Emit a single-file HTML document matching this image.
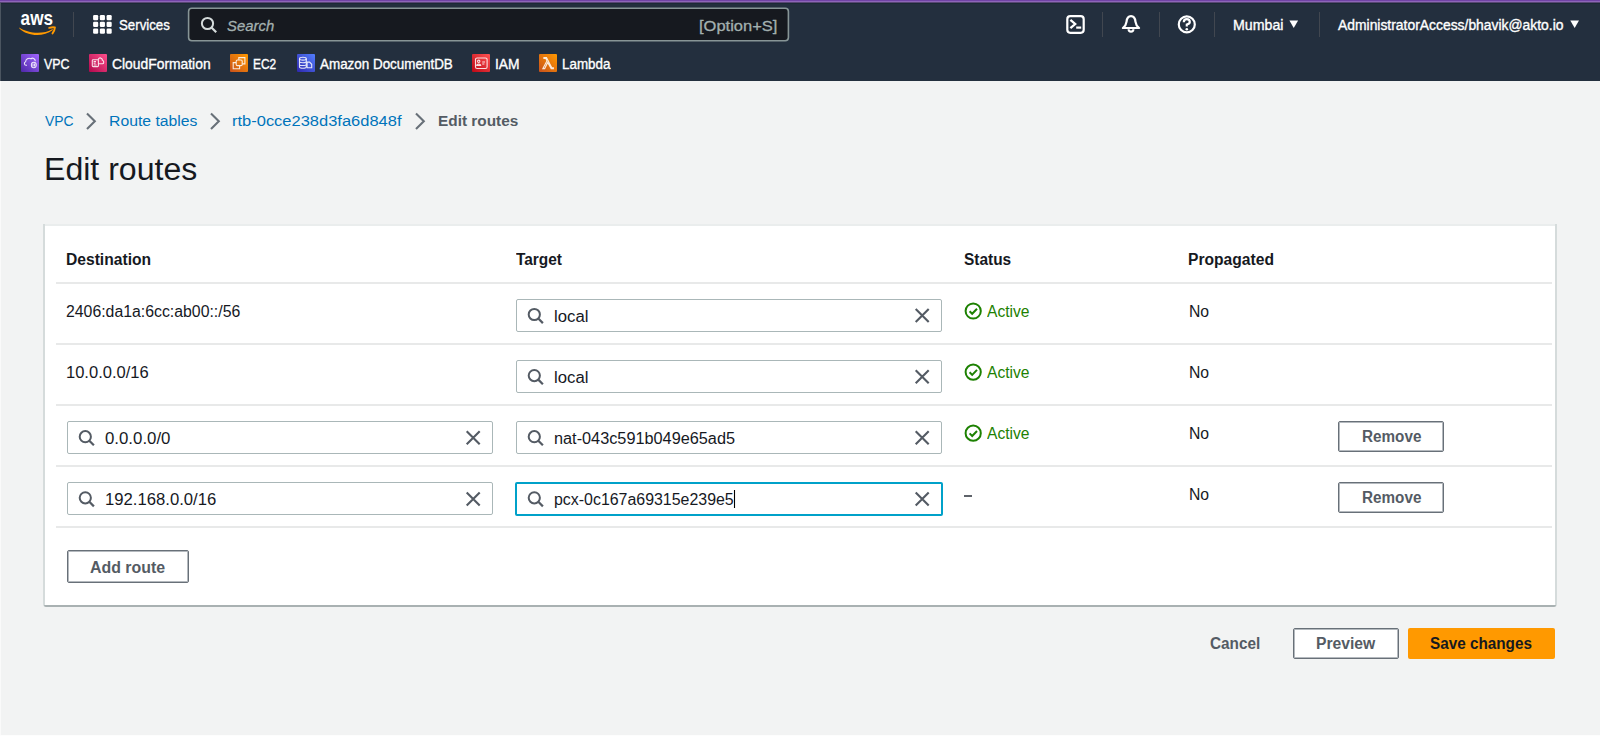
<!DOCTYPE html>
<html><head><meta charset="utf-8"><title>Edit routes</title>
<style>
html,body{margin:0;padding:0;width:1600px;height:736px;overflow:hidden;background:#f2f3f3;font-family:"Liberation Sans",sans-serif;}
.t{position:absolute;white-space:pre;line-height:normal;transform-origin:0 0;}
.a{position:absolute;}
#nav{position:absolute;left:0;top:0;width:1600px;height:81px;background:#232f3e;}
#purple{position:absolute;left:0;top:0;width:1600px;height:4px;background:linear-gradient(#7143a6 0,#7143a6 1px,#8d66b8 1px,#8d66b8 2px,#574673 2px,#574673 3px,#1b2a35 3px,#1b2a35 4px);}
.sep{position:absolute;width:1px;top:12px;height:25px;background:#414750;}
.sq{position:absolute;width:18px;height:18px;top:54px;border-radius:1px;}
.inp{position:absolute;background:#fff;border:1px solid #aab7b8;border-radius:2px;box-sizing:border-box;}
.btn{position:absolute;background:#fff;border:1px solid #687078;border-radius:2px;box-sizing:border-box;box-shadow:inset 0 0 0 1px #b4b9be;}
.div{position:absolute;left:56px;width:1496px;height:2px;background:#e8e9e9;}
svg{position:absolute;overflow:visible;}
</style></head><body>
<div id="nav"></div>
<div id="purple"></div>
<!-- aws logo -->
<svg style="left:0;top:0" width="80" height="40" viewBox="0 0 80 40">
  <text x="20.6" y="24.6" font-family="Liberation Sans" font-weight="700" font-size="20.5" fill="#fff" textLength="32.4" lengthAdjust="spacingAndGlyphs">aws</text>
  <path d="M19.4 27.5 C27 33.2 43 35.2 52.6 29 L52.8 30 C43 37.6 27 36.2 19.4 28.5 Z" fill="#ff9900"/>
  <path d="M49.2 27.9 Q52.6 26.9 54.9 27.5 Q54.7 30.6 52.5 33.4" stroke="#ff9900" stroke-width="1.9" fill="none" stroke-linecap="round" stroke-linejoin="round"/>
</svg>
<div class="sep" style="left:73px"></div>
<!-- grid -->
<svg style="left:0;top:0" width="1" height="1"><g fill="#fff"><rect x="93.1" y="15.1" width="5.1" height="5.1" rx="1.2"/><rect x="99.85" y="15.1" width="5.1" height="5.1" rx="1.2"/><rect x="106.6" y="15.1" width="5.1" height="5.1" rx="1.2"/><rect x="93.1" y="21.85" width="5.1" height="5.1" rx="1.2"/><rect x="99.85" y="21.85" width="5.1" height="5.1" rx="1.2"/><rect x="106.6" y="21.85" width="5.1" height="5.1" rx="1.2"/><rect x="93.1" y="28.6" width="5.1" height="5.1" rx="1.2"/><rect x="99.85" y="28.6" width="5.1" height="5.1" rx="1.2"/><rect x="106.6" y="28.6" width="5.1" height="5.1" rx="1.2"/></g></svg>
<!-- search -->
<svg style="left:0;top:0" width="1" height="1"><rect x="188.6" y="8.3" width="599.8" height="32.4" rx="3.2" fill="#16191f" stroke="#879596" stroke-width="1.6"/></svg>
<svg style="left:0;top:0" width="1" height="1">
  <circle cx="207.5" cy="23.5" r="5.6" stroke="#d5dbdb" stroke-width="2" fill="none"/>
  <path d="M211.5 27.5 L216.2 32.2" stroke="#d5dbdb" stroke-width="2.2" stroke-linecap="butt"/>
</svg>
<!-- right icons -->
<svg style="left:0;top:0" width="1" height="1">
  <rect x="1067.3" y="16.2" width="16.4" height="16.6" rx="3" stroke="#fff" stroke-width="2.2" fill="none"/>
  <path d="M1070.4 19.8 L1075.2 24 L1070.4 28.2" stroke="#fff" stroke-width="2.3" fill="none"/>
  <path d="M1076.2 27.6 L1081.2 27.6" stroke="#fff" stroke-width="2.2"/>
  <!-- bell -->
  <path d="M1122.9 28 H1139.1 Q1135.9 25.4 1135.5 21.8 Q1135 16.1 1131 16.1 Q1127 16.1 1126.5 21.8 Q1126.1 25.4 1122.9 28 Z" stroke="#fff" stroke-width="2.2" fill="none" stroke-linejoin="round"/>
  <path d="M1128.6 29.2 A2.4 2.4 0 0 0 1133.4 29.2" stroke="#fff" stroke-width="2.1" fill="none"/>
  <!-- help -->
  <circle cx="1186.8" cy="24.4" r="8" stroke="#fff" stroke-width="2.2" fill="none"/>
  <path d="M1183.8 22.2 Q1183.8 19.2 1186.8 19.2 Q1189.8 19.2 1189.8 21.9 Q1189.8 23.6 1186.8 24.5 L1186.8 26.6" stroke="#fff" stroke-width="2.2" fill="none"/>
  <circle cx="1186.8" cy="29.2" r="1.3" fill="#fff"/>
  <path d="M1289.4 20.5 L1298.1 20.5 L1293.75 28 Z" fill="#fff"/>
  <path d="M1570.3 20.5 L1579 20.5 L1574.65 28 Z" fill="#fff"/>
</svg>
<div class="sep" style="left:1102px"></div>
<div class="sep" style="left:1159px"></div>
<div class="sep" style="left:1214px"></div>
<div class="sep" style="left:1319px"></div>
<!-- service icons -->
<div class="sq" style="left:21px;background:linear-gradient(45deg,#4d27a8,#a166ff)"></div>
<div class="sq" style="left:89px;background:linear-gradient(45deg,#b0084d,#ff4f8b)"></div>
<div class="sq" style="left:230px;background:linear-gradient(45deg,#c8511b,#ff9900)"></div>
<div class="sq" style="left:297px;background:linear-gradient(45deg,#2e27ad,#527fff)"></div>
<div class="sq" style="left:472px;background:linear-gradient(45deg,#bd0816,#ff5252)"></div>
<div class="sq" style="left:539px;background:linear-gradient(45deg,#c8511b,#ff9900)"></div>
<svg style="left:0;top:0" width="1" height="1">
 <g stroke="#fff" stroke-opacity="0.85" stroke-width="1.1" fill="none">
  <g transform="translate(21,54)">
   <path d="M6 11.3 H5 C3.2 11.3 2.7 8.3 4.6 7.8 C4.7 5 7.5 3.3 10 4.8 C11.5 3.3 14.3 4.6 14.3 7.2"/>
   <rect x="10.4" y="8.3" width="4.8" height="5.4" rx="2.4"/><path d="M12 9.5 V12.5 M13.6 9.5 V12.5"/>
  </g>
  <g transform="translate(89,54)">
   <rect x="3.3" y="5.8" width="6.1" height="6.8" rx="0.8"/><path d="M4.6 7.6 H7 M4.6 9.3 H6.6 M4.6 11 H7.6"/>
   <path d="M9.4 5.8 C9.4 3.8 11.3 3.3 12.3 4.5 C13.2 4.8 13.5 5.5 13.4 6.2 C15 6.5 15.3 9.6 13.6 9.8 H9.5"/>
  </g>
  <g transform="translate(230,54)">
   <path d="M8.8 5.8 V3.6 H14.9 V9.9 H12.5"/><path d="M6 8.6 H3.2 V14.8 H9.6 V11.9"/>
   <rect x="6.2" y="6" width="6" height="5.6" rx="1.2"/>
  </g>
  <g transform="translate(297,54)">
   <ellipse cx="5.9" cy="4.7" rx="3.4" ry="1.4"/><path d="M2.5 4.7 V13 C2.5 14.7 9.3 14.7 9.3 13 V4.7 M2.5 7.6 C2.5 9.1 9.3 9.1 9.3 7.6 M2.5 10.4 C2.5 11.9 9.3 11.9 9.3 10.4"/>
   <path d="M10.1 8.1 H12.6 L14.7 10.3 V13.8 H10.1 Z"/>
  </g>
  <g transform="translate(472,54)">
   <rect x="3.5" y="4" width="11.6" height="10.5" rx="1.6"/>
   <circle cx="6.7" cy="7.3" r="1.2"/><path d="M4.7 11.4 C4.8 9.6 8.6 9.6 8.7 11.4 Z M10.2 8 H13 M10.2 10 H12.4"/>
  </g>
  <g transform="translate(539,54)">
   <path d="M3.9 14.6 L7.9 6.9 L6.8 4.4 H4.9 V3.5 H7.5 L12.8 13.8 H14.4 V14.6 H12.2 L8.7 8.5 L5.7 14.6 Z"/>
  </g>
 </g>
</svg>
<div class="a" style="left:0;top:3px;width:1px;height:78px;background:#4b5560"></div>
<div class="a" style="left:0;top:81px;width:1px;height:655px;background:#fafafa"></div>

<!-- container -->
<div class="a" style="left:43px;top:224px;width:1514px;height:383px;background:#d5dbdb;border-radius:0 0 3px 3px"></div>
<div class="a" style="left:44px;top:605px;width:1512px;height:2px;background:#a9b1b2;border-radius:0 0 3px 3px"></div>
<div class="a" style="left:45px;top:224px;width:1510px;height:2px;background:#eaeded"></div>
<div class="a" style="left:45px;top:226px;width:1510px;height:379px;background:#fff"></div>
<div class="div" style="top:282px"></div>
<div class="div" style="top:343px"></div>
<div class="div" style="top:404px"></div>
<div class="div" style="top:465px"></div>
<div class="div" style="top:526px"></div>

<!-- inputs -->
<div class="inp" style="left:516px;top:299px;width:426px;height:33px"></div>
<div class="inp" style="left:516px;top:360px;width:426px;height:33px"></div>
<div class="inp" style="left:67px;top:421px;width:426px;height:33px"></div>
<div class="inp" style="left:516px;top:421px;width:426px;height:33px"></div>
<div class="inp" style="left:67px;top:482px;width:426px;height:33px"></div>
<div class="inp" style="left:515px;top:482px;width:428px;height:34px;border:2px solid #00a1c9"></div>

<svg style="left:0;top:0" width="1" height="1">
  <g transform="translate(534.3,314.5)"><circle cx="0" cy="0" r="5.6" stroke="#545b64" stroke-width="2" fill="none"/><path d="M4 4 L8.6 8.6" stroke="#545b64" stroke-width="2.2"/></g><g transform="translate(922.2,315.6)"><path d="M-6.5 -6.5 L6.5 6.5 M6.5 -6.5 L-6.5 6.5" stroke="#545b64" stroke-width="2.1"/></g>
  <g transform="translate(534.3,375.6)"><circle cx="0" cy="0" r="5.6" stroke="#545b64" stroke-width="2" fill="none"/><path d="M4 4 L8.6 8.6" stroke="#545b64" stroke-width="2.2"/></g><g transform="translate(922.2,376.7)"><path d="M-6.5 -6.5 L6.5 6.5 M6.5 -6.5 L-6.5 6.5" stroke="#545b64" stroke-width="2.1"/></g>
  <g transform="translate(85.3,436.7)"><circle cx="0" cy="0" r="5.6" stroke="#545b64" stroke-width="2" fill="none"/><path d="M4 4 L8.6 8.6" stroke="#545b64" stroke-width="2.2"/></g><g transform="translate(473.2,437.8)"><path d="M-6.5 -6.5 L6.5 6.5 M6.5 -6.5 L-6.5 6.5" stroke="#545b64" stroke-width="2.1"/></g>
  <g transform="translate(534.3,436.7)"><circle cx="0" cy="0" r="5.6" stroke="#545b64" stroke-width="2" fill="none"/><path d="M4 4 L8.6 8.6" stroke="#545b64" stroke-width="2.2"/></g><g transform="translate(922.2,437.8)"><path d="M-6.5 -6.5 L6.5 6.5 M6.5 -6.5 L-6.5 6.5" stroke="#545b64" stroke-width="2.1"/></g>
  <g transform="translate(85.3,497.8)"><circle cx="0" cy="0" r="5.6" stroke="#545b64" stroke-width="2" fill="none"/><path d="M4 4 L8.6 8.6" stroke="#545b64" stroke-width="2.2"/></g><g transform="translate(473.2,498.9)"><path d="M-6.5 -6.5 L6.5 6.5 M6.5 -6.5 L-6.5 6.5" stroke="#545b64" stroke-width="2.1"/></g>
  <g transform="translate(534.3,497.8)"><circle cx="0" cy="0" r="5.6" stroke="#545b64" stroke-width="2" fill="none"/><path d="M4 4 L8.6 8.6" stroke="#545b64" stroke-width="2.2"/></g><g transform="translate(922.2,498.9)"><path d="M-6.5 -6.5 L6.5 6.5 M6.5 -6.5 L-6.5 6.5" stroke="#545b64" stroke-width="2.1"/></g>
  <g transform="translate(973.2,311)"><circle cx="0" cy="0" r="7.6" stroke="#1d8102" stroke-width="2" fill="none"/><path d="M-3.6 0.2 L-1 2.8 L3.8 -2.2" stroke="#1d8102" stroke-width="2" fill="none"/></g>
  <g transform="translate(973.2,372.1)"><circle cx="0" cy="0" r="7.6" stroke="#1d8102" stroke-width="2" fill="none"/><path d="M-3.6 0.2 L-1 2.8 L3.8 -2.2" stroke="#1d8102" stroke-width="2" fill="none"/></g>
  <g transform="translate(973.2,433.2)"><circle cx="0" cy="0" r="7.6" stroke="#1d8102" stroke-width="2" fill="none"/><path d="M-3.6 0.2 L-1 2.8 L3.8 -2.2" stroke="#1d8102" stroke-width="2" fill="none"/></g>
  <path d="M964 496 L972 496" stroke="#414750" stroke-width="1.7"/>
  <path d="M734.5 490 L734.5 508" stroke="#000" stroke-width="1.1"/>
</svg>

<!-- buttons -->
<div class="btn" style="left:1338px;top:421px;width:106px;height:31px"></div>
<div class="btn" style="left:1338px;top:482px;width:106px;height:31px"></div>
<div class="btn" style="left:67px;top:550px;width:122px;height:33px"></div>
<div class="btn" style="left:1293px;top:628px;width:106px;height:31px"></div>
<div class="a" style="left:1408px;top:628px;width:147px;height:31px;background:#ff9900;border-radius:2px"></div>

<!-- breadcrumb chevrons -->
<svg style="left:0;top:0" width="1" height="1">
  <path d="M87 113.6 L94.8 121.3 L87 129" stroke="#687078" stroke-width="2.1" fill="none"/>
  <path d="M211 113.6 L218.8 121.3 L211 129" stroke="#687078" stroke-width="2.1" fill="none"/>
  <path d="M416 113.6 L423.8 121.3 L416 129" stroke="#687078" stroke-width="2.1" fill="none"/>
</svg>
<div class="a" style="left:0;top:735px;width:1600px;height:1px;background:#fdfdfd"></div>
<span class=t style="left:119.22px;top:16.00px;font-size:15px;font-weight:400;font-style:normal;color:#ffffff;transform:scaleX(0.8839);-webkit-text-stroke:0.35px #fff;">Services</span>
<span class=t style="left:227.24px;top:16.50px;font-size:15.5px;font-weight:400;font-style:italic;color:#a3b0af;transform:scaleX(0.9604);-webkit-text-stroke:0.3px #a3b0af;">Search</span>
<span class=t style="left:698.94px;top:16.90px;font-size:15.5px;font-weight:400;font-style:normal;color:#a3b0af;transform:scaleX(1.0639);-webkit-text-stroke:0.3px #a3b0af;">[Option+S]</span>
<span class=t style="left:1232.59px;top:16.70px;font-size:14px;font-weight:400;font-style:normal;color:#ffffff;transform:scaleX(1.0125);-webkit-text-stroke:0.35px #fff;">Mumbai</span>
<span class=t style="left:1338.20px;top:16.70px;font-size:14px;font-weight:400;font-style:normal;color:#ffffff;transform:scaleX(0.9916);-webkit-text-stroke:0.35px #fff;">AdministratorAccess/bhavik@akto.io</span>
<span class=t style="left:44.40px;top:55.50px;font-size:14px;font-weight:400;font-style:normal;color:#ffffff;transform:scaleX(0.8893);-webkit-text-stroke:0.35px #fff;">VPC</span>
<span class=t style="left:111.51px;top:55.50px;font-size:14px;font-weight:400;font-style:normal;color:#ffffff;transform:scaleX(0.9898);-webkit-text-stroke:0.35px #fff;">CloudFormation</span>
<span class=t style="left:252.85px;top:55.50px;font-size:14px;font-weight:400;font-style:normal;color:#ffffff;transform:scaleX(0.8500);-webkit-text-stroke:0.35px #fff;">EC2</span>
<span class=t style="left:320.10px;top:55.50px;font-size:14px;font-weight:400;font-style:normal;color:#ffffff;transform:scaleX(0.9587);-webkit-text-stroke:0.35px #fff;">Amazon DocumentDB</span>
<span class=t style="left:495.31px;top:55.50px;font-size:14px;font-weight:400;font-style:normal;color:#ffffff;transform:scaleX(0.9870);-webkit-text-stroke:0.35px #fff;">IAM</span>
<span class=t style="left:562.24px;top:55.50px;font-size:14px;font-weight:400;font-style:normal;color:#ffffff;transform:scaleX(0.9560);-webkit-text-stroke:0.35px #fff;">Lambda</span>
<span class=t style="left:45.00px;top:112.00px;font-size:15.5px;font-weight:400;font-style:normal;color:#0073bb;transform:scaleX(0.8968);">VPC</span>
<span class=t style="left:108.58px;top:112.00px;font-size:15.5px;font-weight:400;font-style:normal;color:#0073bb;transform:scaleX(1.0163);">Route tables</span>
<span class=t style="left:232.24px;top:112.00px;font-size:15.5px;font-weight:400;font-style:normal;color:#0073bb;transform:scaleX(1.0629);">rtb-0cce238d3fa6d848f</span>
<span class=t style="left:437.91px;top:112.00px;font-size:15.5px;font-weight:700;font-style:normal;color:#545b64;transform:scaleX(0.9911);">Edit routes</span>
<span class=t style="left:43.93px;top:151.90px;font-size:31px;font-weight:400;font-style:normal;color:#16191f;transform:scaleX(1.0345);">Edit routes</span>
<span class=t style="left:66.42px;top:251.00px;font-size:16px;font-weight:700;font-style:normal;color:#16191f;transform:scaleX(0.9765);">Destination</span>
<span class=t style="left:516.25px;top:251.00px;font-size:16px;font-weight:700;font-style:normal;color:#16191f;transform:scaleX(0.9635);">Target</span>
<span class=t style="left:963.84px;top:251.00px;font-size:16px;font-weight:700;font-style:normal;color:#16191f;transform:scaleX(0.9638);">Status</span>
<span class=t style="left:1187.82px;top:251.00px;font-size:16px;font-weight:700;font-style:normal;color:#16191f;transform:scaleX(0.9767);">Propagated</span>
<span class=t style="left:66.41px;top:302.60px;font-size:16px;font-weight:400;font-style:normal;color:#16191f;transform:scaleX(0.9891);">2406:da1a:6cc:ab00::/56</span>
<span class=t style="left:66.17px;top:363.70px;font-size:16px;font-weight:400;font-style:normal;color:#16191f;transform:scaleX(1.0323);">10.0.0.0/16</span>
<span class=t style="left:553.85px;top:307.80px;font-size:16px;font-weight:400;font-style:normal;color:#16191f;transform:scaleX(1.0452);">local</span>
<span class=t style="left:553.85px;top:368.90px;font-size:16px;font-weight:400;font-style:normal;color:#16191f;transform:scaleX(1.0452);">local</span>
<span class=t style="left:987.00px;top:302.80px;font-size:16px;font-weight:400;font-style:normal;color:#1d8102;transform:scaleX(0.9767);">Active</span>
<span class=t style="left:987.00px;top:363.90px;font-size:16px;font-weight:400;font-style:normal;color:#1d8102;transform:scaleX(0.9767);">Active</span>
<span class=t style="left:987.00px;top:425.00px;font-size:16px;font-weight:400;font-style:normal;color:#1d8102;transform:scaleX(0.9767);">Active</span>
<span class=t style="left:1188.62px;top:302.70px;font-size:16px;font-weight:400;font-style:normal;color:#16191f;transform:scaleX(0.9842);">No</span>
<span class=t style="left:1188.62px;top:363.80px;font-size:16px;font-weight:400;font-style:normal;color:#16191f;transform:scaleX(0.9842);">No</span>
<span class=t style="left:1188.62px;top:424.90px;font-size:16px;font-weight:400;font-style:normal;color:#16191f;transform:scaleX(0.9842);">No</span>
<span class=t style="left:1188.62px;top:486.00px;font-size:16px;font-weight:400;font-style:normal;color:#16191f;transform:scaleX(0.9842);">No</span>
<span class=t style="left:104.55px;top:430.00px;font-size:16px;font-weight:400;font-style:normal;color:#16191f;transform:scaleX(1.0508);">0.0.0.0/0</span>
<span class=t style="left:553.68px;top:430.00px;font-size:16px;font-weight:400;font-style:normal;color:#16191f;transform:scaleX(1.0173);">nat-043c591b049e65ad5</span>
<span class=t style="left:104.56px;top:491.10px;font-size:16px;font-weight:400;font-style:normal;color:#16191f;transform:scaleX(1.0419);">192.168.0.0/16</span>
<span class=t style="left:553.71px;top:491.10px;font-size:16px;font-weight:400;font-style:normal;color:#16191f;transform:scaleX(0.9950);">pcx-0c167a69315e239e5</span>
<span class=t style="left:1361.55px;top:428.30px;font-size:16px;font-weight:700;font-style:normal;color:#545b64;transform:scaleX(0.9541);">Remove</span>
<span class=t style="left:1361.55px;top:489.40px;font-size:16px;font-weight:700;font-style:normal;color:#545b64;transform:scaleX(0.9541);">Remove</span>
<span class=t style="left:90.30px;top:558.50px;font-size:16px;font-weight:700;font-style:normal;color:#545b64;transform:scaleX(0.9933);">Add route</span>
<span class=t style="left:1210.04px;top:635.10px;font-size:16px;font-weight:700;font-style:normal;color:#545b64;transform:scaleX(0.9569);">Cancel</span>
<span class=t style="left:1315.62px;top:635.10px;font-size:16px;font-weight:700;font-style:normal;color:#545b64;transform:scaleX(0.9800);">Preview</span>
<span class=t style="left:1430.44px;top:635.10px;font-size:16px;font-weight:700;font-style:normal;color:#16191f;transform:scaleX(0.9552);">Save changes</span>
</body></html>
